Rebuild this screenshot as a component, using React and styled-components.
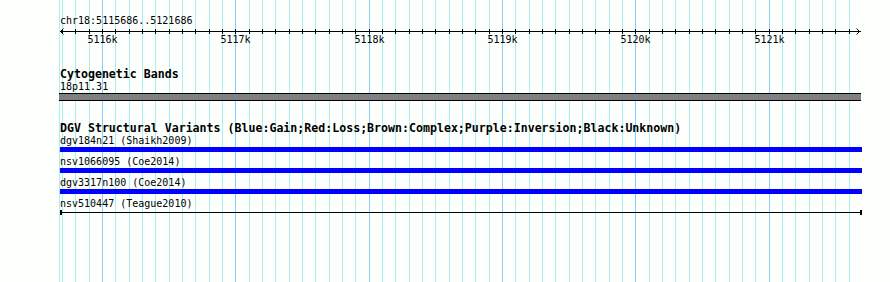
import React from 'react';
import styled, { createGlobalStyle } from 'styled-components';

const START = 5115686;
const END = 5121686;
const LEFT = 60;
const WIDTH = 800;

// bp -> pixel column
const toX = (bp) => Math.round(LEFT + ((bp - START) * WIDTH) / (END - START));

const gridBps = [];
for (let bp = Math.ceil(START / 100) * 100; bp < END; bp += 100) gridBps.push(bp);

const variants = [
  { name: 'dgv184n21 (Shaikh2009)', kind: 'gain' },
  { name: 'nsv1066095 (Coe2014)', kind: 'gain' },
  { name: 'dgv3317n100 (Coe2014)', kind: 'gain' },
  { name: 'nsv510447 (Teague2010)', kind: 'unknown' },
];

const GlobalStyle = createGlobalStyle`
  body {
    margin: 0;
    background: #fcfffc;
  }
`;

const Panel = styled.div`
  position: relative;
  width: 890px;
  height: 282px;
  overflow: hidden;
  background: #fcfffc;
  font-family: 'DejaVu Sans Mono', 'Liberation Mono', monospace;
  color: #000;
`;

const GridLayer = styled.svg`
  position: absolute;
  left: 0;
  top: 0;
`;

const Content = styled.div`
  position: relative;
  padding-top: 15px;
`;

const Locus = styled.div`
  padding-left: ${LEFT}px;
  font-size: 10px;
  line-height: 12px;
  height: 12px;
`;

const RulerSvg = styled.svg`
  display: block;
`;

const Track = styled.section`
  margin-top: 20px;
  padding-left: ${LEFT}px;
`;

const TrackTitle = styled.div`
  font-size: 11.6px;
  font-weight: bold;
  line-height: 14px;
  height: 14px;
  white-space: nowrap;
`;

const FeatureLabel = styled.div`
  font-size: 10px;
  line-height: 11px;
  height: 11px;
  white-space: nowrap;
`;

const Band = styled.div`
  box-sizing: border-box;
  margin: 1px 0 0 -1px;
  width: 802px;
  height: 8px;
  background: #808080;
  border-top: 1px solid #000;
  border-bottom: 1px solid #000;
`;

const Feature = styled.div`
  margin-bottom: 4px;
`;

const Bar = styled.div`
  box-sizing: border-box;
  margin-top: 1px;
  width: 802px;
  height: 5px;
  background: ${(p) => (p.$kind === 'gain' ? '#0000ff' : 'linear-gradient(#000, #000) center / 100% 1px no-repeat')};
  border-left: ${(p) => (p.$kind === 'gain' ? 'none' : '2px solid #000')};
  border-right: ${(p) => (p.$kind === 'gain' ? 'none' : '2px solid #000')};
`;

function Grid() {
  return (
    <GridLayer width="890" height="282" shapeRendering="crispEdges">
      <line x1="59.5" x2="59.5" y1="0" y2="282" stroke="#afeeee" />
      {gridBps.map((bp) => (
        <line
          key={bp}
          x1={toX(bp) + 0.5}
          x2={toX(bp) + 0.5}
          y1="0"
          y2="282"
          stroke={bp % 1000 === 0 ? '#87cefa' : '#afeeee'}
        />
      ))}
    </GridLayer>
  );
}

function Ruler() {
  return (
    <RulerSvg width="890" height="20" shapeRendering="crispEdges">
      <line x1="60" x2="861" y1="4.5" y2="4.5" stroke="#000" />
      {gridBps.map((bp) => (
        <line key={bp} x1={toX(bp) + 0.5} x2={toX(bp) + 0.5} y1="2" y2="7" stroke="#000" />
      ))}
      <polyline points="63.5,1.5 60.5,4.5 63.5,7.5" fill="none" stroke="#000" shapeRendering="auto" />
      <polyline points="856.5,1.5 859.5,4.5 856.5,7.5" fill="none" stroke="#000" shapeRendering="auto" />
      {gridBps
        .filter((bp) => bp % 1000 === 0)
        .map((bp) => (
          <text
            key={bp}
            x={toX(bp) + 0.5}
            y="16"
            textAnchor="middle"
            fontSize="10"
            fontFamily="'DejaVu Sans Mono', 'Liberation Mono', monospace"
            fill="#000"
          >
            {bp / 1000}k
          </text>
        ))}
    </RulerSvg>
  );
}

export default function App() {
  return (
    <>
      <GlobalStyle />
      <Panel>
        <Grid />
        <Content>
          <Locus>chr18:5115686..5121686</Locus>
          <Ruler />

          <Track>
            <TrackTitle>Cytogenetic Bands</TrackTitle>
            <FeatureLabel>18p11.31</FeatureLabel>
            <Band />
          </Track>

          <Track>
            <TrackTitle>
              DGV Structural Variants (Blue:Gain;Red:Loss;Brown:Complex;Purple:Inversion;Black:Unknown)
            </TrackTitle>
            {variants.map((v) => (
              <Feature key={v.name}>
                <FeatureLabel>{v.name}</FeatureLabel>
                <Bar $kind={v.kind} />
              </Feature>
            ))}
          </Track>
        </Content>
      </Panel>
    </>
  );
}
